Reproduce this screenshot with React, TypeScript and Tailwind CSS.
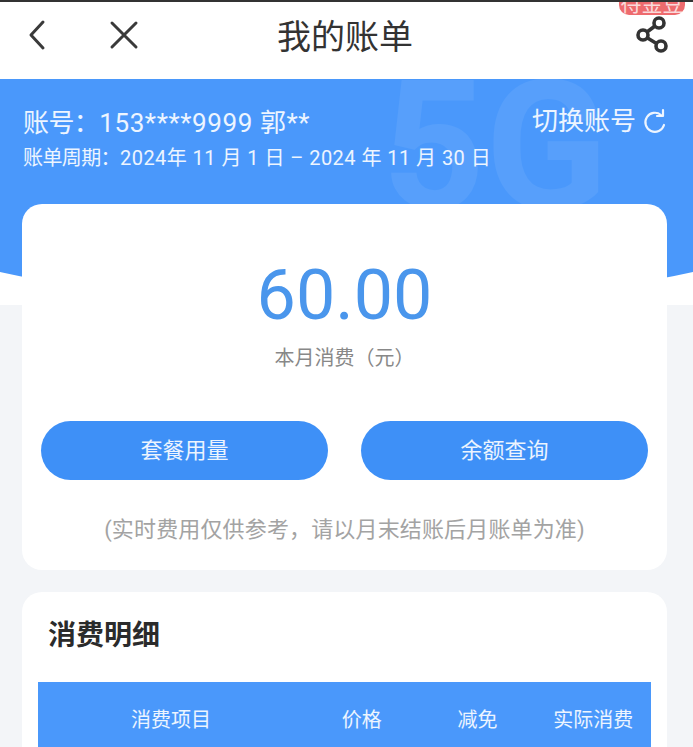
import React from "react";

const font = { fontFamily: '"Roboto", "Noto Sans CJK SC", sans-serif' };

function Header() {
  return (
    <div className="relative flex h-[79px] items-center bg-white pl-[27px]">
      <svg width="20" height="32" viewBox="0 0 20 32" fill="none" stroke="#3a3a3a" strokeWidth="3" strokeLinecap="round" strokeLinejoin="round" className="mb-[9px]">
        <path d="M16 3 L4 16 L16 29" />
      </svg>
      <svg width="30" height="30" viewBox="0 0 30 30" fill="none" stroke="#3a3a3a" strokeWidth="3" strokeLinecap="round" className="mb-[9px] ml-[62px]">
        <path d="M3 3 L27 27 M27 3 L3 27" />
      </svg>
      <div className="ml-[138px] pb-[5px] text-[34px] leading-none whitespace-nowrap text-[#333]">我的账单</div>
      <svg width="34" height="38" viewBox="0 0 34 38" fill="none" stroke="#333" strokeWidth="3.6" className="mb-[10px] ml-auto mr-[24px]">
        <circle cx="24" cy="7" r="5" />
        <circle cx="8" cy="19" r="5" />
        <circle cx="26" cy="30" r="5" />
        <path d="M12 16 L20 10 M12.5 22 L21.5 27.5" />
      </svg>
      <div className="absolute right-[8px] top-[-10px] flex h-[25px] w-[66px] items-center justify-center rounded-[10px] bg-[#ee6b6e] pt-[3px] text-[21px] leading-none text-white/75">
        待金豆
      </div>
    </div>
  );
}

function Hero() {
  return (
    <div className="h-[226px] bg-white">
      <div className="relative h-[226px] overflow-hidden bg-[#4a98fb] px-[23px] pt-[26px] text-white/90 [clip-path:ellipse(650px_228px_at_50%_0)]">
        <div className="absolute left-[382px] top-[-22px] text-[180px] font-bold leading-none text-white/[0.07]">5G</div>
        <div className="relative flex items-start justify-between pr-[3px]">
          <div className="text-[26px] leading-[36px]">
            <span className="tracking-[-0.6px]">账号：</span>
            <span className="tracking-[0.6px]">153****9999 郭**</span>
          </div>
          <div className="flex items-center gap-[7px] text-[26px] leading-[32px]">
            切换账号
            <svg width="24" height="26" viewBox="0 0 24 26" fill="none" stroke="currentColor" strokeWidth="2.2" strokeLinecap="round" strokeLinejoin="round">
              <path d="M18 7 A9.5 9.5 0 1 0 21 17" />
              <path d="M20 2 L20 8 L14 8" />
            </svg>
          </div>
        </div>
        <div className="relative mt-[3px] whitespace-nowrap text-[20px] leading-[28px]">
          <span className="tracking-[-0.6px]">账单周期：</span>
          <span className="tracking-[0.45px]">2024年 11 月 1 日 – 2024 年 11 月 30 日</span>
        </div>
      </div>
    </div>
  );
}

function SummaryCard() {
  return (
    <div className="relative ml-[22px] mr-[26px] mt-[-101px] flex h-[366px] flex-col items-center rounded-[20px] bg-white">
      <div className="mt-[53px] text-[70px] leading-[76px] text-[#4a96ec]">60.00</div>
      <div className="mt-[11px] text-[20px] leading-[28px] text-[#888]">本月消费（元）</div>
      <div className="mt-[49px] flex w-full justify-between px-[19px]">
        <div className="flex h-[59px] w-[287px] items-center justify-center rounded-full bg-[#3e90f7] text-[22px] text-white/90">套餐用量</div>
        <div className="flex h-[59px] w-[287px] items-center justify-center rounded-full bg-[#3e90f7] text-[22px] text-white/90">余额查询</div>
      </div>
      <div className="mt-[34px] whitespace-nowrap text-[22px] leading-[32px] tracking-[0.15px] text-[#a3a3a3]">(实时费用仅供参考，请以月末结账后月账单为准)</div>
    </div>
  );
}

function DetailCard() {
  return (
    <div className="ml-[22px] mr-[26px] mt-[22px] rounded-t-[20px] bg-white px-[16px] pb-[20px] pt-[26px]">
      <div className="pl-[10px] text-[28px] font-bold leading-[36px] text-[#2b2b2b]">消费明细</div>
      <div className="mt-[28px] grid h-[80px] grid-cols-[266px_1fr_1fr_1fr] items-start bg-[#4a98fb] pt-[24px] text-center text-[20px] leading-[28px] text-white/90">
        <div>消费项目</div>
        <div>价格</div>
        <div>减免</div>
        <div>实际消费</div>
      </div>
    </div>
  );
}

export default function App() {
  return (
    <div className="relative h-[747px] w-[693px] overflow-hidden bg-[#f3f5f8]" style={font}>
      <Header />
      <Hero />
      <SummaryCard />
      <DetailCard />
      <div className="absolute left-0 right-0 top-0 h-[2px] bg-[#333]" />
    </div>
  );
}
